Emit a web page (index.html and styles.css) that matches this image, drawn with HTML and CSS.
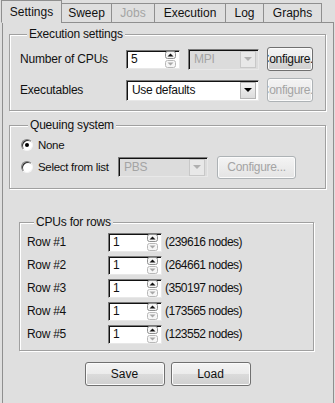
FILE: index.html
```html
<!DOCTYPE html>
<html lang="en">
<head>
  <meta charset="UTF-8">
  <meta name="viewport" content="width=device-width, initial-scale=1.0">
  <title>Settings</title>
  <link rel="stylesheet" href="styles.css">
</head>
<body>
  <svg class="defs" width="0" height="0">
    <symbol id="spin" viewBox="0 0 11 17">
      <rect x="0.5" y="0.5" width="10" height="7" rx="2" fill="#f6f6f6" stroke="#8e8f8f"/>
      <rect x="0.5" y="9.5" width="10" height="7" rx="2" fill="#f6f6f6" stroke="#b8b8b8"/>
      <path d="M2.5 5.5h6L5.5 2.5z" fill="#111"/>
      <path d="M2.5 11.5h6L5.5 14.5z" fill="#a8a8a8"/>
    </symbol>
  </svg>

  <div class="tabs">
    <div class="tab tab-settings active">Settings</div>
    <div class="tab tab-sweep">Sweep</div>
    <div class="tab tab-jobs disabled">Jobs</div>
    <div class="tab tab-exec">Execution</div>
    <div class="tab tab-log">Log</div>
    <div class="tab tab-graphs">Graphs</div>
    <div class="tab-fill"></div>
  </div>

  <div class="panel">
    <fieldset class="group group-exec">
      <legend>Execution settings</legend>
      <div class="row">
        <span class="row-label">Number of CPUs</span>
        <div class="spin"><span class="spin-value">5</span><svg class="spin-btns"><use href="#spin"/></svg></div>
        <div class="combo combo-mpi disabled"><span class="combo-text">MPI</span><span class="combo-btn"></span></div>
        <button class="btn btn-small"><span>Configure...</span></button>
      </div>
      <div class="row">
        <span class="row-label">Executables</span>
        <div class="combo combo-exe"><span class="combo-text">Use defaults</span><span class="combo-btn"></span></div>
        <button class="btn btn-small" disabled><span>Configure...</span></button>
      </div>
    </fieldset>

    <fieldset class="group group-queue">
      <legend>Queuing system</legend>
      <div class="row row-none">
        <span class="radio-opt"><span class="radio checked"></span>None</span>
      </div>
      <div class="row">
        <span class="radio-opt"><span class="radio"></span>Select from list</span>
        <div class="combo combo-pbs disabled"><span class="combo-text">PBS</span><span class="combo-btn"></span></div>
        <button class="btn btn-queue" disabled><span>Configure...</span></button>
      </div>
    </fieldset>

    <fieldset class="group group-cpus">
      <legend>CPUs for rows</legend>
      <div class="cpu-row">
        <span class="cpu-label">Row #1</span>
        <div class="spin"><span class="spin-value">1</span><svg class="spin-btns"><use href="#spin"/></svg></div>
        <span class="nodes">(239616 nodes)</span>
      </div>
      <div class="cpu-row">
        <span class="cpu-label">Row #2</span>
        <div class="spin"><span class="spin-value">1</span><svg class="spin-btns"><use href="#spin"/></svg></div>
        <span class="nodes">(264661 nodes)</span>
      </div>
      <div class="cpu-row">
        <span class="cpu-label">Row #3</span>
        <div class="spin"><span class="spin-value">1</span><svg class="spin-btns"><use href="#spin"/></svg></div>
        <span class="nodes">(350197 nodes)</span>
      </div>
      <div class="cpu-row">
        <span class="cpu-label">Row #4</span>
        <div class="spin"><span class="spin-value">1</span><svg class="spin-btns"><use href="#spin"/></svg></div>
        <span class="nodes">(173565 nodes)</span>
      </div>
      <div class="cpu-row">
        <span class="cpu-label">Row #5</span>
        <div class="spin"><span class="spin-value">1</span><svg class="spin-btns"><use href="#spin"/></svg></div>
        <span class="nodes">(123552 nodes)</span>
      </div>
    </fieldset>

    <div class="actions">
      <button class="btn btn-wide"><span>Save</span></button>
      <button class="btn btn-wide"><span>Load</span></button>
    </div>
  </div>
</body>
</html>
```

FILE: styles.css
```css
body {
  margin: 0;
  background: #dfdfdf;
  font-family: "Liberation Sans", Arial, sans-serif;
  font-size: 11px;
  color: #111;
  overflow: hidden;
}
.defs { position: absolute; }

/* tabs */
.tabs { display: flex; align-items: flex-end; height: 23px; padding-left: 1px; }
.tab {
  box-sizing: border-box;
  height: 20px; line-height: 18px;
  text-align: center;
  border: 1px solid #8f8f8f;
  margin-left: -1px;
  background: #dfdfdf;
  font-size: 12px;
}
.tab.active {
  height: 23px; line-height: 21px; padding-top: 1px;
  border-bottom-color: #dfdfdf;
}
.tab.disabled { color: #a4a4a4; }
.tab-settings { width: 61px; margin-left: 0; }
.tab-sweep { width: 51px; }
.tab-jobs { width: 44px; }
.tab-exec { width: 72px; }
.tab-log { width: 39px; }
.tab-graphs { width: 59px; }
.tab-fill { flex: 1; border-bottom: 1px solid #8f8f8f; margin-right: 1px; }

.panel {
  margin: 0 1px 0 2px;
  height: 390px;
  padding: 4px 7px 0 6px;
  border: 1px solid #8f8f8f; border-top: none;
}

/* group boxes */
.group {
  margin: 0; padding: 0; min-width: 0;
  border: 1px solid #a0a0a0;
  box-shadow: inset 1px 1px 0 #fff, 1px 1px 0 #fff;
}
.group legend {
  margin-left: 7px; padding: 0 2px;
  line-height: 14px;
  font-size: 12px;
  letter-spacing: -0.2px;
  background: #dfdfdf;
}
.group-exec { padding: 6px 0 8px 10px; }
.group-queue { margin-top: 7px; padding: 3px 0 9px 11px; }
.group-cpus { margin: 26px 12px 0 10px; padding: 3px 0 6px 7px; }

.row { display: flex; align-items: center; height: 24px; }
.row + .row { margin-top: 7px; }
.group-queue .row + .row { margin-top: 0; }
.row-none { height: 20px; }
.row-label { width: 106px; font-size: 12px; letter-spacing: -0.2px; }

/* spin box */
.spin {
  width: 52px; height: 17px;
  display: flex; align-items: center; justify-content: space-between;
  background: #fff;
  border: 1px solid; border-color: #7a7a7a #e8e8e8 #e8e8e8 #7a7a7a;
  box-shadow: inset 1px 1px 0 #111;
}
.spin-value { padding-left: 4px; font-size: 12px; }
.spin-btns { width: 11px; height: 17px; margin-right: 3px; }

/* combo boxes */
.combo {
  height: 19px;
  display: flex; align-items: center; justify-content: space-between;
  background: #fff;
  border: 1px solid; border-color: #7a7a7a #e8e8e8 #e8e8e8 #7a7a7a;
  box-shadow: inset 1px 1px 0 #111;
}
.combo-text { padding-left: 5px; font-size: 12px; letter-spacing: -0.3px; }
.combo-btn {
  width: 14px; height: 15px; margin-right: 2px;
  display: flex; align-items: center; justify-content: center;
  background: linear-gradient(#f4f4f4, #dcdcdc);
  border: 1px solid #b4b4b4;
}
.combo-btn::after {
  content: "";
  border-left: 4px solid transparent; border-right: 4px solid transparent;
  border-top: 4px solid #000;
}
.combo.disabled { background: #dcdcdc; color: #a4a4a4; }
.combo.disabled .combo-btn { background: #e8e8e8; border-color: #c8c8c8; }
.combo.disabled .combo-btn::after { border-top-color: #b0b0b0; }
.combo-mpi { width: 69px; margin-left: 8px; }
.combo-exe { width: 131px; }
.combo-pbs { width: 88px; height: 18px; }

/* buttons */
.btn {
  height: 24px; padding: 0;
  display: flex; align-items: center; justify-content: center;
  overflow: hidden; white-space: nowrap;
  font: inherit; color: #111;
  background: linear-gradient(#f4f4f4 0%, #ebebeb 50%, #dbdbdb 51%, #cfcfcf 100%);
  border: 1px solid #707070; border-radius: 3px;
  box-shadow: inset 0 0 0 1px #fbfbfb;
}
.btn span { flex: none; }
.btn:disabled {
  color: #a4a4a4; border-color: #adb2b5;
  background: linear-gradient(#f4f4f4, #e4e4e4);
}
.btn-small { width: 46px; margin-left: 8px; font-size: 12px; letter-spacing: -0.3px; }
.btn-queue { width: 79px; margin-left: 9px; height: 23px; font-size: 12px; letter-spacing: -0.3px; }
.btn-wide { width: 80px; font-size: 12px; }

/* radios */
.radio-opt { display: flex; align-items: center; width: 97px; font-size: 11.5px; letter-spacing: -0.3px; }
.radio {
  width: 10px; height: 10px; margin-right: 5px;
  display: flex; align-items: center; justify-content: center;
  border-radius: 50%;
  background: #fff;
  border: 1px solid; border-color: #808080 #f4f4f4 #f4f4f4 #808080;
  box-shadow: inset 1px 1px 0 #303030;
}
.radio.checked::after {
  content: ""; width: 4px; height: 4px; border-radius: 50%; background: #000;
}

/* cpu rows */
.cpu-row { display: flex; align-items: center; height: 20px; }
.cpu-row + .cpu-row { margin-top: 3px; }
.cpu-label { width: 81px; font-size: 12px; letter-spacing: -0.3px; }
.nodes { margin-left: 3px; font-size: 12px; letter-spacing: -0.5px; }

.actions { display: flex; justify-content: center; gap: 6px; margin-top: 11px; }
```
